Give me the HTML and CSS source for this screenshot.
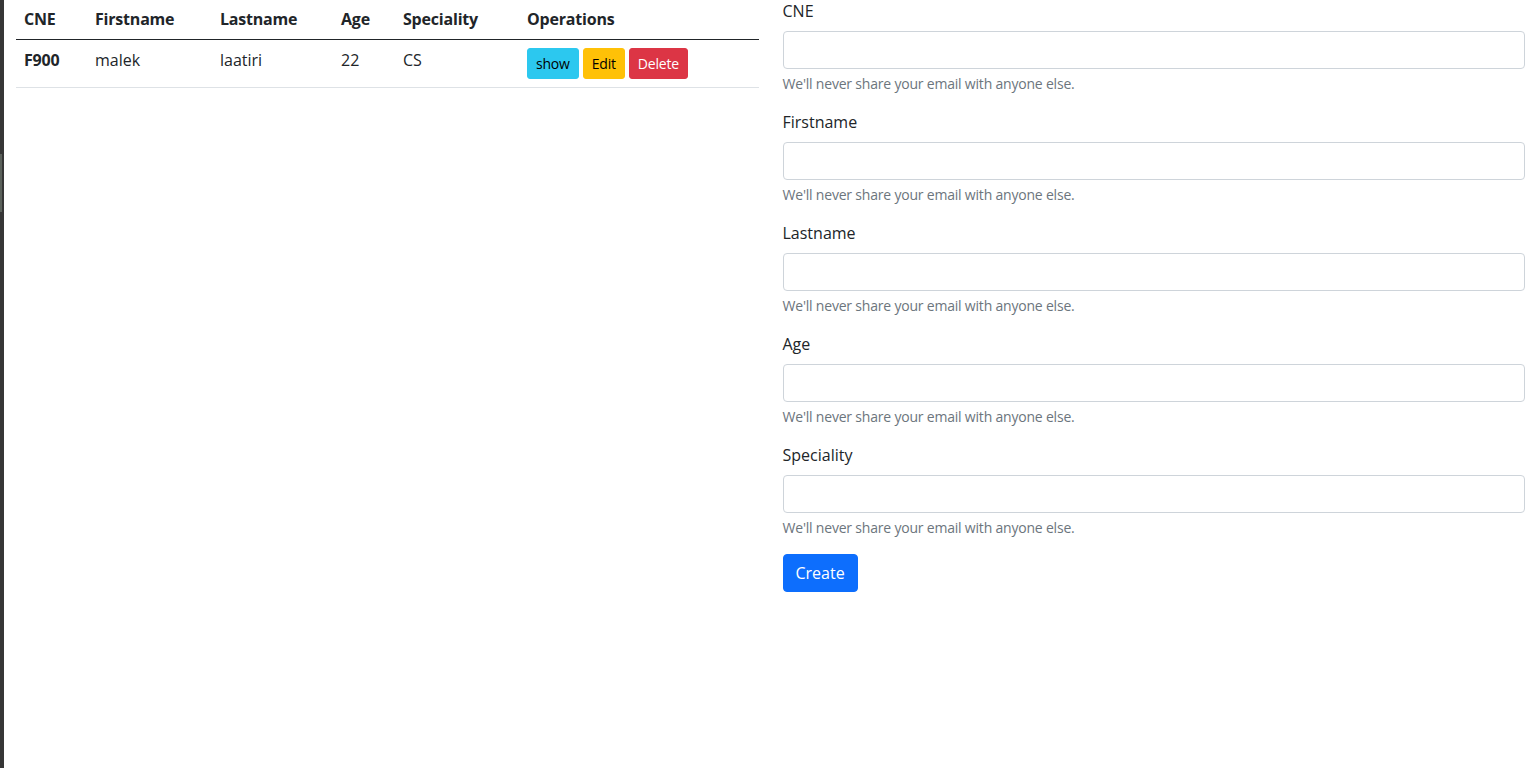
FILE: index.html
```html
<!DOCTYPE html>
<html lang="en">
<head>
<meta charset="utf-8">
<title>Students</title>
<link rel="stylesheet" href="styles.css">
</head>
<body>
<div class="strip"></div>
<div class="page">
  <div class="col">
    <table class="table">
      <colgroup>
        <col class="c1"><col class="c2"><col class="c3"><col class="c4"><col class="c5"><col>
      </colgroup>
      <thead>
        <tr><th>CNE</th><th>Firstname</th><th>Lastname</th><th>Age</th><th>Speciality</th><th>Operations</th></tr>
      </thead>
      <tbody>
        <tr>
          <th>F900</th><td>malek</td><td>laatiri</td><td>22</td><td>CS</td>
          <td class="ops"><button class="btn btn-sm btn-info">show</button><button class="btn btn-sm btn-warning">Edit</button><button class="btn btn-sm btn-danger">Delete</button></td>
        </tr>
      </tbody>
    </table>
  </div>
  <div class="col">
    <form class="form">
      <div class="group">
        <label class="label">CNE</label>
        <input class="input" type="text">
        <div class="help">We'll never share your email with anyone else.</div>
      </div>
      <div class="group">
        <label class="label">Firstname</label>
        <input class="input" type="text">
        <div class="help">We'll never share your email with anyone else.</div>
      </div>
      <div class="group">
        <label class="label">Lastname</label>
        <input class="input" type="text">
        <div class="help">We'll never share your email with anyone else.</div>
      </div>
      <div class="group">
        <label class="label">Age</label>
        <input class="input" type="text">
        <div class="help">We'll never share your email with anyone else.</div>
      </div>
      <div class="group">
        <label class="label">Speciality</label>
        <input class="input" type="text">
        <div class="help">We'll never share your email with anyone else.</div>
      </div>
      <div><button type="button" class="btn btn-primary">Create</button></div>
    </form>
  </div>
</div>
</body>
</html>
```
FILE: styles.css
```css
* { box-sizing: border-box; }
html, body { height: 100%; }
body {
  margin: 0;
  display: flex;
  font-family: "Open Sans", "Noto Sans", sans-serif;
  font-size: 16px;
  line-height: 1.5;
  color: #212529;
  background: #fff;
}
.strip {
  width: 4px;
  flex: none;
  background:
    linear-gradient(#5b615b, #5b615b) 0 154px / 2px 58px no-repeat,
    #363636;
}
.page {
  flex: 1;
  margin-top: -1px;
  display: grid;
  grid-template-columns: 1fr 1fr;
  align-items: start;
}
.col { padding: 0 12px; }

.table {
  width: 100%;
  border-collapse: collapse;
  table-layout: fixed;
}
.c1 { width: 71px; }
.c2 { width: 125px; }
.c3 { width: 121px; }
.c4 { width: 62px; }
.c5 { width: 124px; }
.table th, .table td {
  padding: 8px;
  text-align: left;
  vertical-align: top;
  white-space: nowrap;
}
.table th { font-weight: 700; letter-spacing: -0.2px; }
.table td { font-weight: 400; }
.table thead tr { border-bottom: 1px solid #212529; }
.table tbody tr { border-bottom: 1px solid #dee2e6; }
.ops { display: flex; gap: 4px; }

.btn {
  display: inline-block;
  font-family: inherit;
  font-size: 16px;
  line-height: 24px;
  padding: 6px 12px;
  border: 1px solid transparent;
  border-radius: 4px;
  cursor: pointer;
}
.btn-sm {
  font-size: 14px;
  line-height: 21px;
  padding: 4px 8px;
  border-radius: 3px;
  letter-spacing: -0.2px;
}
.btn-info { background: #2cc8ef; border-color: #2cc8ef; color: #000; }
.btn-warning { background: #ffc107; border-color: #ffc107; color: #000; }
.btn-danger { background: #dc3545; border-color: #dc3545; color: #fff; }
.btn-primary { background: #0d6efd; border-color: #0d6efd; color: #fff; }

.form { display: flex; flex-direction: column; }
.group { margin-bottom: 16px; }
.label { display: block; margin-bottom: 8px; }
.input {
  display: block;
  width: 100%;
  height: 38px;
  padding: 6px 12px;
  font-family: inherit;
  font-size: 16px;
  border: 1px solid #ced4da;
  border-radius: 4px;
  background: #fff;
}
.help {
  margin-top: 4px;
  font-size: 14px;
  line-height: 21px;
  color: #6c757d;
  letter-spacing: -0.2px;
}
```
